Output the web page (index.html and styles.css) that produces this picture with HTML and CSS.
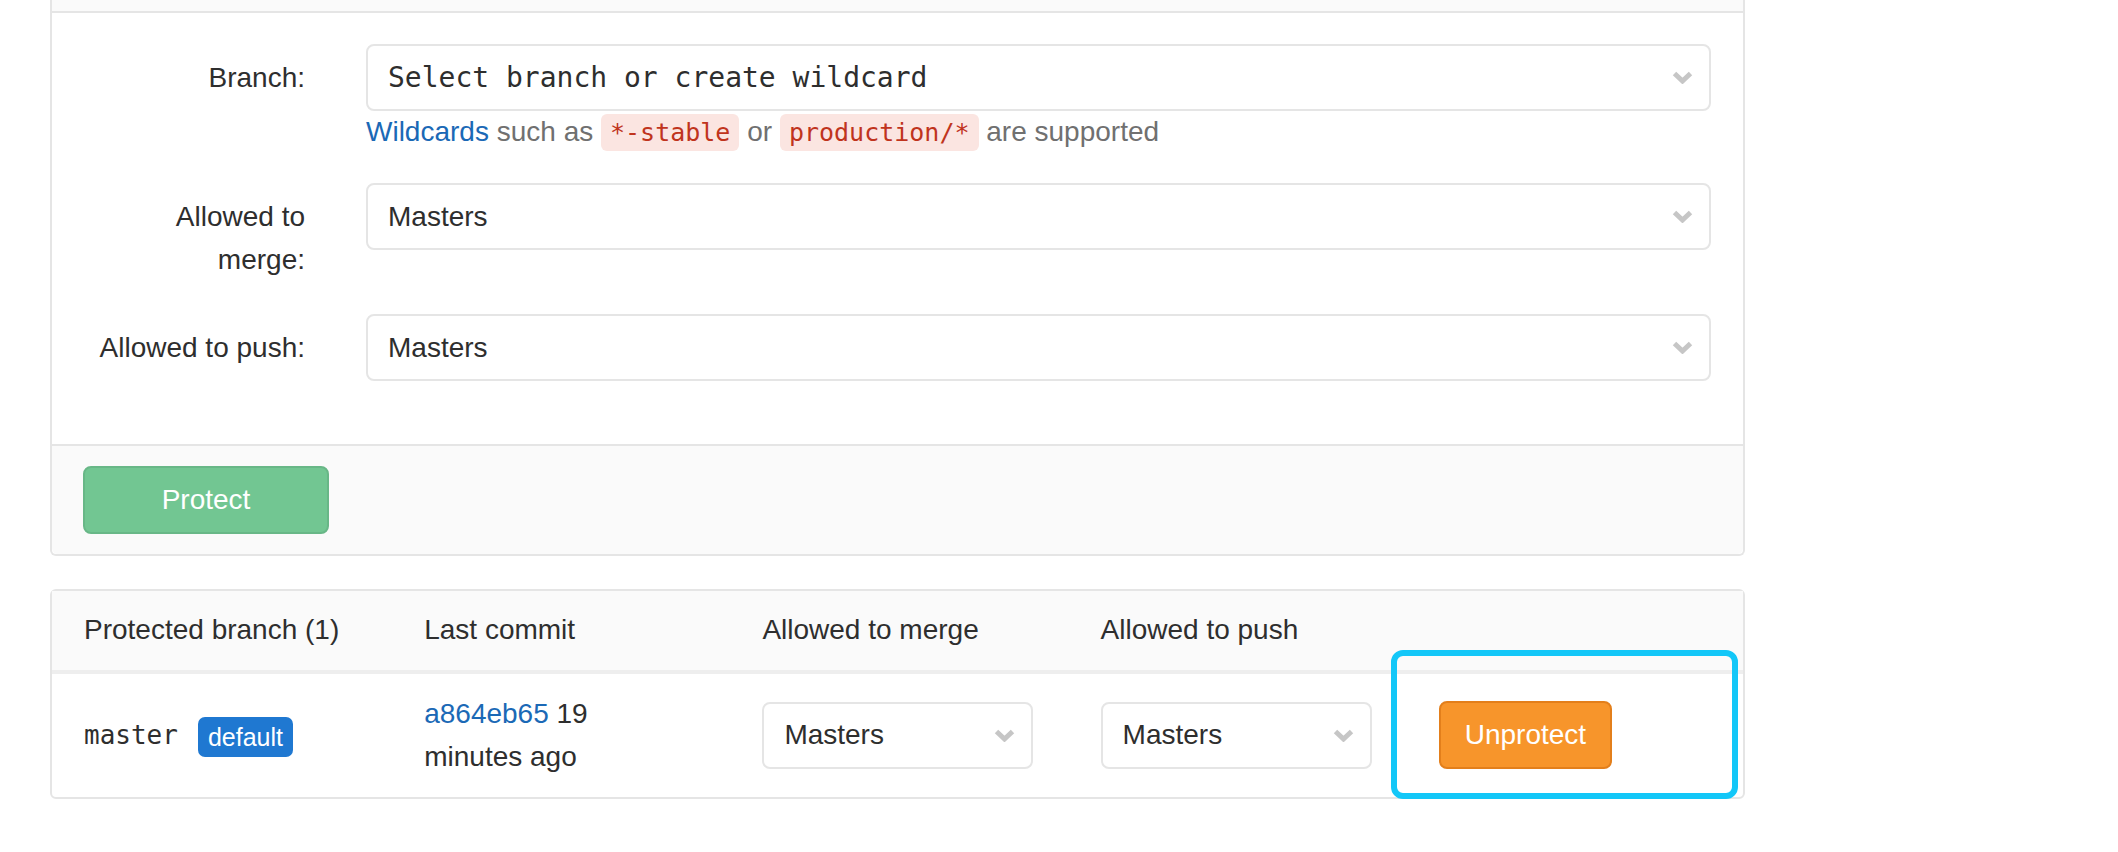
FILE: index.html
```html
<!DOCTYPE html>
<html lang="en">
<head>
<meta charset="utf-8">
<title>Protected branches</title>
<link rel="stylesheet" href="styles.css">
</head>
<body>
<div class="page">
  <div class="panel form-panel">
    <div class="panel-heading"></div>
    <form class="panel-body">
      <div class="form-group first">
        <label class="control-label">Branch:</label>
        <div class="control">
          <div class="select mono">
            <span>Select branch or create wildcard</span>
            <svg class="chevron" width="21" height="13" viewBox="0 0 21 13"><polyline points="2.5,2.5 10.5,10 18.5,2.5" fill="none" stroke="#c6c6c6" stroke-width="5"/></svg>
          </div>
          <p class="help"><a href="#" class="link">Wildcards</a> such as <code>*-stable</code> or <code>production/*</code> are supported</p>
        </div>
      </div>
      <div class="form-group">
        <label class="control-label">Allowed to merge:</label>
        <div class="control">
          <div class="select">
            <span>Masters</span>
            <svg class="chevron" width="21" height="13" viewBox="0 0 21 13"><polyline points="2.5,2.5 10.5,10 18.5,2.5" fill="none" stroke="#c6c6c6" stroke-width="5"/></svg>
          </div>
        </div>
      </div>
      <div class="form-group last">
        <label class="control-label">Allowed to push:</label>
        <div class="control">
          <div class="select">
            <span>Masters</span>
            <svg class="chevron" width="21" height="13" viewBox="0 0 21 13"><polyline points="2.5,2.5 10.5,10 18.5,2.5" fill="none" stroke="#c6c6c6" stroke-width="5"/></svg>
          </div>
        </div>
      </div>
    </form>
    <div class="form-actions">
      <button class="btn btn-create" type="button">Protect</button>
    </div>
  </div>

  <div class="panel table-panel">
    <table class="table">
      <thead>
        <tr>
          <th>Protected branch (1)</th>
          <th>Last commit</th>
          <th>Allowed to merge</th>
          <th>Allowed to push</th>
          <th></th>
        </tr>
      </thead>
      <tbody>
        <tr>
          <td><span class="branch-name">master</span><span class="badge">default</span></td>
          <td><div class="commit-info"><a href="#" class="link">a864eb65</a><span class="time"> 19 minutes ago</span></div></td>
          <td>
            <div class="select small">
              <span>Masters</span>
              <svg class="chevron" width="21" height="13" viewBox="0 0 21 13"><polyline points="2.5,2.5 10.5,10 18.5,2.5" fill="none" stroke="#c6c6c6" stroke-width="5"/></svg>
            </div>
          </td>
          <td>
            <div class="select small">
              <span>Masters</span>
              <svg class="chevron" width="21" height="13" viewBox="0 0 21 13"><polyline points="2.5,2.5 10.5,10 18.5,2.5" fill="none" stroke="#c6c6c6" stroke-width="5"/></svg>
            </div>
          </td>
          <td><button class="btn btn-warning" type="button">Unprotect</button></td>
        </tr>
      </tbody>
    </table>
    <div class="highlight"></div>
  </div>
</div>
</body>
</html>
```

FILE: styles.css
```css
html, body {
  margin: 0;
  padding: 0;
  background: #ffffff;
}

body {
  font-family: "Liberation Sans", Arial, sans-serif;
  font-size: 28px;
  color: #2e2e2e;
}

.page {
  padding-left: 50px;
  width: 1695px;
}

.panel {
  border: 2px solid #e5e5e5;
  border-radius: 6px;
  background: #ffffff;
}

.form-panel {
  border-top: 0;
  border-top-left-radius: 0;
  border-top-right-radius: 0;
}

.panel-heading {
  height: 11px;
  background: #fafafa;
  border-bottom: 2px solid #e5e5e5;
}

.panel-body {
  display: block;
  margin: 0;
  padding: 31px 32px 63px 0;
}

.form-group {
  display: flex;
  gap: 61px;
  margin-bottom: 33px;
}

.form-group.first {
  margin-bottom: 29px;
}

.form-group.last {
  margin-bottom: 0;
}

.control-label {
  flex: 0 0 220px;
  margin-left: 33px;
  padding-top: 12px;
  line-height: 43px;
  text-align: right;
}

.control {
  flex: 1;
}

.select {
  box-sizing: border-box;
  height: 67px;
  display: flex;
  align-items: center;
  justify-content: space-between;
  border: 2px solid #e5e5e5;
  border-radius: 8px;
  padding: 0 16px 0 20px;
  background: #ffffff;
  line-height: 42px;
}

.select.small {
  width: 271px;
}

.mono {
  font-family: "DejaVu Sans Mono", "Liberation Mono", monospace;
}

.chevron {
  display: block;
  flex: 0 0 auto;
}

.help {
  margin: 0;
  line-height: 42px;
  color: #707070;
}

.link {
  color: #1b69b6;
  text-decoration: none;
}

code {
  font-family: "DejaVu Sans Mono", "Liberation Mono", monospace;
  font-size: 25px;
  color: #c0341d;
  background: #fbe5e1;
  padding: 4px 9px;
  border-radius: 6px;
}

.form-actions {
  background: #fafafa;
  border-top: 2px solid #e5e5e5;
  padding: 20px 31px;
  border-bottom-left-radius: 6px;
  border-bottom-right-radius: 6px;
}

.btn {
  box-sizing: border-box;
  height: 68px;
  border-radius: 8px;
  border: 2px solid transparent;
  font-family: "Liberation Sans", Arial, sans-serif;
  font-size: 28px;
  color: #ffffff;
  padding: 0 24px;
  cursor: pointer;
}

.btn-create {
  width: 246px;
  background: #72c692;
  border-color: #68b787;
}

.btn-warning {
  background: #f7952b;
  border-color: #e37f1b;
}

.table-panel {
  position: relative;
  margin-top: 33px;
}

.table {
  width: 100%;
  border-collapse: collapse;
  table-layout: fixed;
}

.table th {
  background: #fafafa;
  font-weight: normal;
  text-align: left;
  padding: 18px 32px 19px 34px;
  line-height: 42px;
  border-bottom: 4px solid #eeeeee;
}

.table td {
  padding: 18px 32px 19px 34px;
  line-height: 43px;
  vertical-align: middle;
}

.table th:first-child,
.table td:first-child {
  padding-left: 32px;
}

.branch-name {
  font-family: "DejaVu Sans Mono", "Liberation Mono", monospace;
  font-size: 26px;
}

.badge {
  display: inline-block;
  margin-left: 20px;
  height: 40px;
  line-height: 40px;
  padding: 0 10px;
  font-size: 25px;
  color: #ffffff;
  background: #1f78d1;
  border-radius: 7px;
  vertical-align: middle;
}

.commit-info {
  max-width: 250px;
}

.highlight {
  position: absolute;
  left: 1339px;
  top: 59px;
  width: 347px;
  height: 149px;
  box-sizing: border-box;
  border: 6px solid #13c7f8;
  border-radius: 12px;
  pointer-events: none;
}
```
